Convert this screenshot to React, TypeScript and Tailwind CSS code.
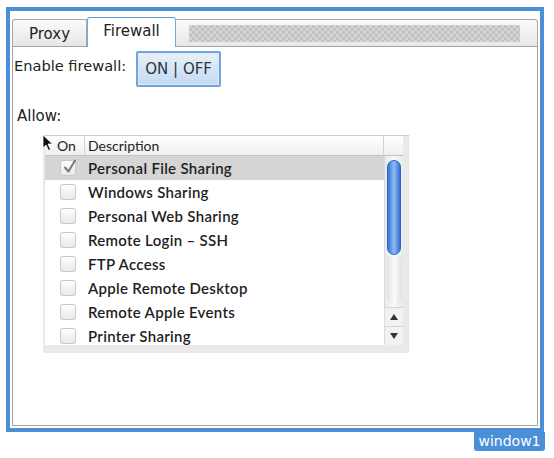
import { useState } from 'react'

const services = [
  'Personal File Sharing',
  'Windows Sharing',
  'Personal Web Sharing',
  'Remote Login – SSH',
  'FTP Access',
  'Apple Remote Desktop',
  'Remote Apple Events',
  'Printer Sharing',
]

function CheckBox({ checked }: { checked: boolean }) {
  return (
    <div className="relative h-[16px] w-[16px] rounded-[3px] border border-[#c9c9c9] bg-gradient-to-b from-[#fdfdfd] to-[#e9e9e9]">
      {checked && (
        <svg viewBox="0 0 16 16" className="absolute -top-[3px] left-[1px] h-[17px] w-[16px]">
          <path d="M3 9 L6.5 13 L13 2" fill="none" stroke="#7a7a7a" strokeWidth="2" strokeLinecap="round" strokeLinejoin="round" />
        </svg>
      )}
    </div>
  )
}

function ServiceTable() {
  const [checked, setChecked] = useState<boolean[]>(services.map((_, i) => i === 0))

  return (
    <div className="relative ml-[29px] mt-[10px] flex h-[218px] w-[366px] flex-col border-t border-[#cfcfcf] bg-[#e9e9e9] pb-[8px] pl-[2px] pr-[6px] font-['Lato',sans-serif]">
      {/* mouse cursor */}
      <svg viewBox="0 0 12 18" className="absolute -left-[1px] -top-[2px] z-10 h-[18px] w-[12px]">
        <path d="M1 1 L1 14 L4 11 L6.5 16.5 L8.5 15.5 L6 10 L10.5 10 Z" fill="#111" stroke="#fff" strokeWidth="0.8" />
      </svg>

      {/* header */}
      <div className="flex h-[20px] border-b border-[#c4c4c4] bg-gradient-to-b from-[#ffffff] to-[#efefef] text-[14px] text-[#222]">
        <div className="flex w-[40px] items-center border-r border-[#d0d0d0] pl-[12px]">On</div>
        <div className="flex flex-1 items-center border-r border-[#d0d0d0] pl-[3px]">Description</div>
        <div className="w-[19px]" />
      </div>

      <div className="flex flex-1 overflow-hidden bg-white">
        {/* rows */}
        <div className="flex-1">
          {services.map((name, i) => (
            <div
              key={name}
              className={`flex h-[24px] items-center ${i === 0 ? 'bg-[#d5d5d5]' : 'bg-white'}`}
              onClick={() => setChecked(c => c.map((v, j) => (j === i ? !v : v)))}
            >
              <div className="flex w-[40px] justify-center pl-[6px]">
                <CheckBox checked={checked[i]} />
              </div>
              <span className="pl-[3px] text-[15px] font-semibold tracking-[0.3px] text-[#1e1e1e]">{name}</span>
            </div>
          ))}
        </div>

        {/* scrollbar */}
        <div className="flex w-[19px] flex-col border-l border-[#dadada] bg-[#f4f4f4]">
          <div className="flex flex-1 flex-col items-center bg-gradient-to-r from-[#e9e9e9] via-[#fafafa] to-[#e9e9e9] pt-[4px]">
            <div className="h-[95px] w-[14px] rounded-full border border-[#2a66c8] bg-gradient-to-r from-[#3474d6] via-[#8fbdf3] to-[#3170d2]" />
            <div className="mt-[2px] h-[48px] w-[15px] rounded-b-full bg-gradient-to-r from-[#e2e2e2] via-[#fbfbfb] to-[#e2e2e2]" />
          </div>
          <div className="flex h-[19px] items-center justify-center border-t border-[#d4d4d4] bg-[#f2f2f2]">
            <svg viewBox="0 0 8 6" className="h-[6px] w-[8px]"><path d="M4 0 L8 6 L0 6 Z" fill="#333" /></svg>
          </div>
          <div className="flex h-[19px] items-center justify-center border-t border-[#d4d4d4] bg-[#f2f2f2]">
            <svg viewBox="0 0 8 6" className="h-[6px] w-[8px]"><path d="M0 0 L8 0 L4 6 Z" fill="#333" /></svg>
          </div>
        </div>
      </div>
    </div>
  )
}

export default function App() {
  const [tab, setTab] = useState('Firewall')
  const [on, setOn] = useState(true)

  return (
    <div className="h-[458px] w-[554px] bg-white pl-[6px] pt-[7px] font-['DejaVu_Sans',sans-serif] text-[15px] text-[#222]">
      <div className="h-[425px] w-[538px] border-4 border-[#4a8fd8] bg-white px-[2px] pb-[2px] pt-[6px]">
        <div className="flex h-full flex-col">

          {/* Tab bar */}
          <div className="flex h-[30px] items-end border-b border-[#a4a4a4]">
            <button
              className="flex h-[27px] w-[75px] items-center justify-center rounded-tl-[3px] border border-b-0 border-[#a8a8a8] bg-gradient-to-b from-[#fbfbfb] to-[#e6e6e6] pt-[2px]"
              onClick={() => setTab('Proxy')}
            >
              Proxy
            </button>
            <button
              className="-mb-px flex h-[30px] w-[89px] items-center justify-center rounded-t-[3px] border border-b-0 border-[#7aa6da] border-t-[#5b97d8] bg-white pb-[2px]"
              onClick={() => setTab('Firewall')}
            >
              Firewall
            </button>
            <div className="flex h-[27px] flex-1 items-center rounded-tr-[4px] border border-b-0 border-l-0 border-[#a8a8a8] bg-gradient-to-b from-[#fbfbfb] to-[#e8e8e8] pl-[13px] pr-[17px]">
              <div className="h-[17px] flex-1 bg-[conic-gradient(#c2c2c2_25%,#d4d4d4_0_50%,#c2c2c2_0_75%,#d4d4d4_0)] bg-[length:6px_6px]" />
            </div>
          </div>

          {/* Firewall panel */}
          <div className="flex-1 border border-t-0 border-[#a4a4a4] bg-white pl-[1px]" data-tab={tab}>
            <div className="mt-[4px] flex items-start">
              <span className="mt-[6px] text-[14.6px] leading-[18px]">Enable firewall:</span>
              <button
                className="ml-[10px] flex h-[36px] w-[85px] items-center justify-center rounded-[2px] border-2 border-[#72a4de] bg-gradient-to-b from-[#e8f1fa] to-[#c4d9f0] text-[15px] text-[#2c3540] shadow-[inset_0_0_0_1px_#dbe8f6]"
                onClick={() => setOn(!on)}
              >
                ON | OFF
              </button>
            </div>

            <div className="ml-[3px] mt-[20px] leading-[18px]">Allow:</div>

            <ServiceTable />
          </div>
        </div>
      </div>

      {/* window label */}
      <div className="ml-[468px] flex h-[19px] w-[71px] items-center justify-center rounded-b-[3px] bg-[#4a8fd8] text-[14px] text-white">
        window1
      </div>
    </div>
  )
}
